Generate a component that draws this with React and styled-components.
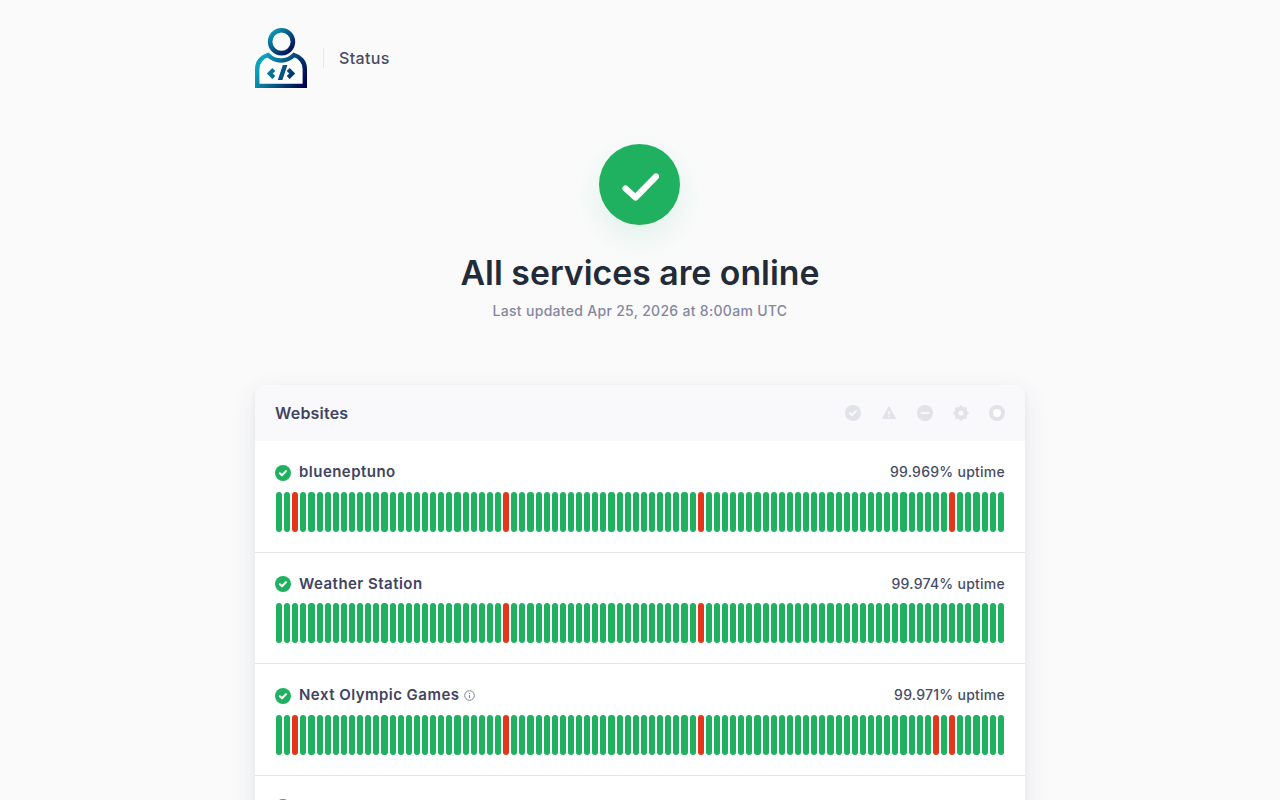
import React from "react";
import styled, { createGlobalStyle } from "styled-components";

const Global = createGlobalStyle`
  html, body { margin: 0; padding: 0; background: #fafafb; }
  body { font-family: Inter, "Liberation Sans", sans-serif; color: #3f4462; overflow: hidden; height: 800px; }
`;
const Page = styled.div`
  width: 770px;
  margin: 0 auto;
`;
const Header = styled.header`
  display: flex;
  align-items: center;
  height: 60px;
  padding-top: 28px;
`;
const Divider = styled.span`
  width: 1px;
  height: 20px;
  background: #e8e9ef;
  margin: 0 15px 0 16px;
`;
const Brand = styled.span`
  font-size: 16px;
  font-weight: 500;
  letter-spacing: 0.37px;
  color: #474c66;
`;
const Hero = styled.section`
  display: flex;
  flex-direction: column;
  align-items: center;
  padding-top: 56px;
`;
const HeroIcon = styled.div`
  width: 81px;
  height: 81px;
  margin-right: 1px;
  border-radius: 50%;
  background: #20b160;
  display: flex;
  align-items: center;
  justify-content: center;
  box-shadow: 0 12px 30px rgba(32, 178, 95, 0.12);
`;
const Title = styled.h1`
  margin: 26px 0 0;
  font-family: "Inter", sans-serif;
  font-size: 33.8px;
  line-height: 44px;
  font-weight: 600;
  color: #222b38;
`;
const Updated = styled.p`
  margin: 6px 0 0;
  font-size: 14px;
  line-height: 20px;
  font-weight: 500;
  letter-spacing: 0.3px;
  color: #8487a0;
`;
const Card = styled.section`
  margin-top: 64.4px;
  border-radius: 10px 10px 0 0;
  background: #fff;
  box-shadow: 0 8px 24px rgba(60, 66, 87, 0.1), 0 2px 6px rgba(60, 66, 87, 0.05);
`;
const CardHead = styled.div`
  display: flex;
  align-items: center;
  justify-content: space-between;
  height: 56px;
  padding: 0 20px;
  background: #f9f9fc;
  border-radius: 10px 10px 0 0;
`;
const CardTitle = styled.h2`
  margin: 0;
  font-size: 16px;
  font-weight: 600;
  letter-spacing: 0.2px;
  color: #3f4462;
`;
const Legend = styled.div`
  display: flex;
  gap: 20px;
`;
const Row = styled.div`
  padding: 19.6px 20px 0;
  height: 111.5px;
  box-sizing: border-box;
  border-bottom: 1px solid #e5e6ec;
  &:last-child { border-bottom: 0; }
`;
const RowHead = styled.div`
  display: flex;
  align-items: center;
  justify-content: space-between;
  height: 22px;
`;
const Name = styled.div`
  display: flex;
  align-items: center;
  gap: 8px;
  font-size: 15px;
  font-weight: 600;
  letter-spacing: 0.47px;
  color: #3f4462;
`;
const StatusIcon = styled.svg`
  display: block;
  flex: none;
  margin-top: 2px;
`;
const Uptime = styled.div`
  font-size: 14px;
  font-weight: 500;
  letter-spacing: 0.25px;
  color: #474c66;
`;
const Bars = styled.div`
  display: flex;
  gap: 2px;
  margin-top: 8.9px;
  padding: 0 1px;
`;
const Bar = styled.span`
  flex: 1;
  height: 40px;
  border-radius: 3px;
  background: ${(p) => (p.$down ? "#e1371b" : "#20b160")};
`;
const InfoIcon = styled.svg`
  margin: 2px 0 0 -3px;
`;

const Check = () => (
  <StatusIcon width="16" height="16" viewBox="0 0 16 16">
    <circle cx="8" cy="8" r="8" fill="#20b160" />
    <path d="M4.9 8.3l2.1 2 4-4.2" fill="none" stroke="#fff" strokeWidth="2" strokeLinecap="round" strokeLinejoin="round" />
  </StatusIcon>
);
const Info = () => (
  <InfoIcon width="11" height="11" viewBox="0 0 11 11">
    <circle cx="5.5" cy="5.5" r="4.8" fill="none" stroke="#7d819c" strokeWidth="1" />
    <path d="M5.5 5v3M5.5 3v1" stroke="#7d819c" strokeWidth="1.1" />
  </InfoIcon>
);
const L = "#e1e3e8";
const H = "#f9f9fc";
const LegendIcons = () => (
  <Legend>
    <svg width="16" height="16" viewBox="0 0 16 16"><circle cx="8" cy="8" r="8" fill={L} /><path d="M4.9 8.3l2.1 2 4-4.2" fill="none" stroke={H} strokeWidth="2" strokeLinecap="round" strokeLinejoin="round" /></svg>
    <svg width="16" height="16" viewBox="0 0 16 16"><path d="M8 1.8 14.6 13.6H1.4z" fill={L} stroke={L} strokeLinejoin="round" /><path d="M8 6v3.6M8 10.8v1.4" stroke={H} strokeWidth="1.5" /></svg>
    <svg width="16" height="16" viewBox="0 0 16 16"><circle cx="8" cy="8" r="8" fill={L} /><path d="M4.5 8h7" stroke={H} strokeWidth="2.2" strokeLinecap="round" /></svg>
    <svg width="16" height="16" viewBox="0 0 16 16"><circle cx="8" cy="8" r="4.6" fill="none" stroke={L} strokeWidth="4" /><path d="M8 .4v3M8 12.6v3M.4 8h3M12.6 8h3M2.6 2.6l2.2 2.2M11.2 11.2l2.2 2.2M13.4 2.6l-2.2 2.2M4.8 11.2l-2.2 2.2" stroke={L} strokeWidth="2.6" /></svg>
    <svg width="16" height="16" viewBox="0 0 16 16"><circle cx="8" cy="8" r="6" fill="#fff" stroke={L} strokeWidth="4" /></svg>
  </Legend>
);
const Logo = () => (
  <svg width="52" height="60" viewBox="0 0 52 60">
    <defs>
      <linearGradient id="lg" x1="0" y1="0" x2="1" y2="1">
        <stop offset="0" stopColor="#0aa5bc" />
        <stop offset="0.55" stopColor="#054b7d" />
        <stop offset="1" stopColor="#03004f" />
      </linearGradient>
      <linearGradient id="lb" gradientUnits="userSpaceOnUse" x1="4" y1="36" x2="48" y2="60">
        <stop offset="0" stopColor="#0aa5bc" />
        <stop offset="0.55" stopColor="#054b7d" />
        <stop offset="1" stopColor="#03004f" />
      </linearGradient>
    </defs>
    <circle cx="26.5" cy="13.7" r="11.4" fill="none" stroke="url(#lg)" strokeWidth="4.6" />
    <path d="M2.2 58V41C2.2 33.5 7.5 28.5 13 27c3.5 3.5 8 5.500 13 5.500s9.500-2 13-5.500c5.500 1.500 10.800 6.500 10.800 14V58z" fill="#fff" stroke="url(#lb)" strokeWidth="4.4" strokeLinejoin="miter" />
    <path d="M18.800 41.500 14.800 45.500l4 4M33.200 41.500l4 4-4 4" fill="none" stroke="url(#lb)" strokeWidth="4.200" />
    <path d="M27.800 37h4.600L27.400 52h-4.600z" fill="url(#lb)" />
  </svg>
);

const DAYS = 90;
const services = [
  { name: "blueneptuno", uptime: "99.969", down: [2, 28, 52, 83] },
  { name: "Weather Station", uptime: "99.974", down: [28, 52] },
  { name: "Next Olympic Games", uptime: "99.971", down: [2, 28, 52, 81, 83], info: true },
];

export default function App() {
  return (
    <Page>
      <Global />
      <Header>
        <Logo />
        <Divider />
        <Brand>Status</Brand>
      </Header>
      <Hero>
        <HeroIcon>
          <svg width="38" height="32" viewBox="0 0 38 32">
            <path d="M4.500 19.500 14.500 28.500 35 7.500" fill="none" stroke="#fff" strokeWidth="6.200" strokeLinecap="round" strokeLinejoin="round" />
          </svg>
        </HeroIcon>
        <Title>All services are online</Title>
        <Updated>Last updated Apr 25, 2026 at 8:00am UTC</Updated>
      </Hero>
      <Card>
        <CardHead>
          <CardTitle>Websites</CardTitle>
          <LegendIcons />
        </CardHead>
        {services.map((s) => (
          <Row key={s.name}>
            <RowHead>
              <Name>
                <Check />
                {s.name}
                {s.info && <Info />}
              </Name>
              <Uptime>{s.uptime}% uptime</Uptime>
            </RowHead>
            <Bars>
              {Array.from({ length: DAYS }, (_, i) => (
                <Bar key={i} $down={s.down.includes(i)} />
              ))}
            </Bars>
          </Row>
        ))}
        <Row>
          <RowHead>
            <Name>
              <Check />
            </Name>
          </RowHead>
        </Row>
      </Card>
    </Page>
  );
}
